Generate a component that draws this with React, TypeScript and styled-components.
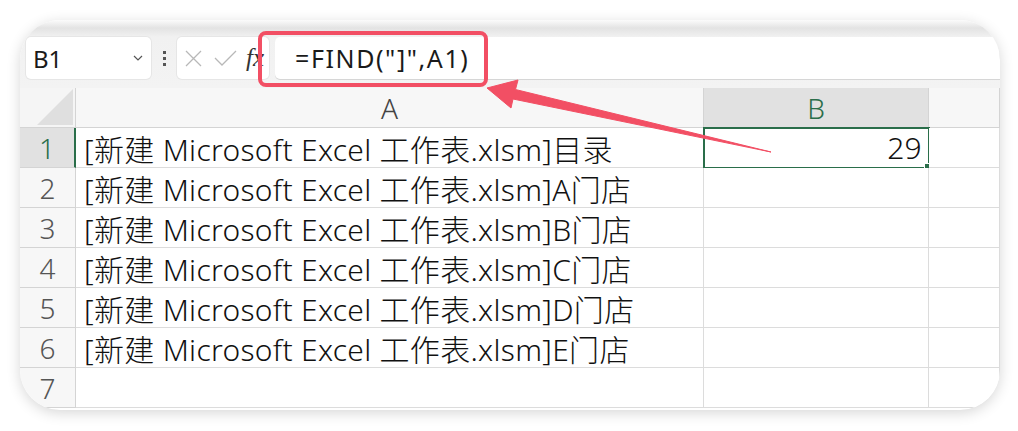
import * as React from 'react';
import styled, { createGlobalStyle } from 'styled-components';

const GlobalStyle = createGlobalStyle`
  html, body {
    margin: 0;
    padding: 0;
    background: #ffffff;
  }
  body {
    font-family: "Noto Sans", "Noto Sans CJK SC", sans-serif;
    color: #1a1a1a;
  }
`;

const rows = [
  '[新建 Microsoft Excel 工作表.xlsm]目录',
  '[新建 Microsoft Excel 工作表.xlsm]A门店',
  '[新建 Microsoft Excel 工作表.xlsm]B门店',
  '[新建 Microsoft Excel 工作表.xlsm]C门店',
  '[新建 Microsoft Excel 工作表.xlsm]D门店',
  '[新建 Microsoft Excel 工作表.xlsm]E门店',
  '',
];

const App = () => {
  return (
    <>
      <GlobalStyle />
      <Page>
        <Card>
          <Toolbar>
            <NameBox>
              <span>B1</span>
              <Chevron viewBox="0 0 10 6">
                <path d="M1 1l4 4 4-4" fill="none" stroke="#555" strokeWidth="1.2" />
              </Chevron>
            </NameBox>
            <Dots>
              <i />
              <i />
              <i />
            </Dots>
            <ActionBox>
              <ActionIcon viewBox="0 0 17 17" width="17" height="17">
                <path d="M1 1l15 15M16 1L1 16" stroke="#b8b8b8" strokeWidth="1.3" fill="none" />
              </ActionIcon>
              <ActionIcon viewBox="0 0 23 16" width="23" height="16">
                <path d="M1 8l7 7L22 1" stroke="#b8b8b8" strokeWidth="1.3" fill="none" />
              </ActionIcon>
              <Fx>fx</Fx>
            </ActionBox>
            <FormulaInput>=FIND("]",A1)</FormulaInput>
          </Toolbar>

          <Grid>
            <Corner>
              <svg width="36" height="36" viewBox="0 0 36 36">
                <path d="M36 0V36H0Z" fill="#dfdfdf" />
              </svg>
            </Corner>
            <ColHeader>A</ColHeader>
            <ColHeader active>B</ColHeader>
            <ColHeader />

            {rows.map((text, i) => (
              <React.Fragment key={i}>
                <RowHeader active={i === 0}>{i + 1}</RowHeader>
                <Cell>{text}</Cell>
                <Cell align="right" selected={i === 0}>
                  {i === 0 ? '29' : ''}
                  {i === 0 && <FillHandle />}
                </Cell>
                <Cell />
              </React.Fragment>
            ))}
          </Grid>
        </Card>

        <Annotation viewBox="0 0 1018 431" width="1018" height="431">
          <rect x="260" y="33" width="226" height="52" rx="6" fill="none" stroke="#f24f64" strokeWidth="4" />
          <path
            d="M487 88 L518 80 L515.5 89.5 L771 152 L513 99 L511 108 Z"
            fill="#f24f64"
            stroke="#f24f64"
            strokeWidth="1"
            strokeLinejoin="round"
          />
        </Annotation>
      </Page>
    </>
  );
};

export default App;

const Page = styled.div`
  position: relative;
  width: 1018px;
  height: 431px;
  padding: 20px 18px 21px 20px;
  box-sizing: border-box;
`;

const Card = styled.div`
  width: 980px;
  height: 390px;
  border-radius: 40px;
  overflow: hidden;
  background: #ffffff;
  box-shadow: 0 3px 14px rgba(0, 0, 0, 0.16);
  display: flex;
  flex-direction: column;
`;

const Toolbar = styled.div`
  height: 68px;
  flex: none;
  box-sizing: border-box;
  padding: 17px 0 9px 6px;
  display: flex;
  align-items: stretch;
  background: linear-gradient(to bottom, #fbfbfb 0px, #e3e3e3 8px, #f1f1f1 17px, #f3f3f3 100%);
`;

const NameBox = styled.div`
  width: 125px;
  box-sizing: border-box;
  background: #ffffff;
  border-radius: 5px;
  box-shadow: 0 0 0 1px #e6e6e6;
  display: flex;
  align-items: center;
  justify-content: space-between;
  padding: 0 8px 0 7px;
  font-family: "Noto Sans", sans-serif;
  font-size: 24px;
  color: #1a1a1a;
`;

const Chevron = styled.svg`
  width: 10px;
  height: 6px;
`;

const Dots = styled.div`
  width: 26px;
  display: flex;
  flex-direction: column;
  align-items: center;
  justify-content: center;
  gap: 3px;

  i {
    display: block;
    width: 3px;
    height: 3px;
    background: #555;
  }
`;

const ActionBox = styled.div`
  width: 92px;
  background: #ffffff;
  border-radius: 5px;
  box-shadow: 0 0 0 1px #e6e6e6;
  display: flex;
  align-items: center;
  padding-left: 8px;
  gap: 12px;
  box-sizing: border-box;
`;

const ActionIcon = styled.svg`
  flex: none;
`;

const Fx = styled.span`
  font-family: "Liberation Serif", serif;
  font-style: italic;
  font-size: 25px;
  color: #333;
  margin-left: -3px;
`;

const FormulaInput = styled.div`
  flex: 1;
  margin-left: 6px;
  background: #ffffff;
  border-radius: 5px 0 0 5px;
  box-shadow: 0 1px 0 #d6d6d6;
  display: flex;
  align-items: center;
  padding-left: 20px;
  font-family: "Noto Sans", sans-serif;
  font-size: 25px;
  letter-spacing: 1.6px;
  color: #1a1a1a;
`;

const Grid = styled.div`
  display: grid;
  grid-template-columns: 56px 628px 225px 1fr;
  grid-auto-rows: 40px;
`;

const Corner = styled.div`
  background: #f5f5f5;
  border-right: 1px solid #d4d4d4;
  border-bottom: 1px solid #d4d4d4;
  display: flex;
  align-items: flex-end;
  justify-content: flex-end;
  padding: 0 2px 2px 0;
`;

const ColHeader = styled.div<{ active?: boolean }>`
  background: ${(p) => (p.active ? '#e1e1e1' : '#f7f7f7')};
  border-right: 1px solid #d4d4d4;
  border-bottom: 1px solid #d4d4d4;
  display: flex;
  align-items: center;
  justify-content: center;
  font-size: 28px;
  font-weight: 300;
  color: ${(p) => (p.active ? '#2a6e4a' : '#444')};
`;

const RowHeader = styled.div<{ active?: boolean }>`
  background: ${(p) => (p.active ? '#e1e1e1' : '#f7f7f7')};
  border-right: ${(p) => (p.active ? '2px solid #2a6e4a' : '1px solid #d4d4d4')};
  border-bottom: 1px solid #d4d4d4;
  display: flex;
  align-items: center;
  justify-content: center;
  font-size: 28px;
  font-weight: 300;
  color: ${(p) => (p.active ? '#2a6e4a' : '#555')};
`;

const Cell = styled.div<{ align?: 'left' | 'right'; selected?: boolean }>`
  position: relative;
  background: #ffffff;
  border-right: 1px solid #dcdcdc;
  border-bottom: 1px solid #dcdcdc;
  display: flex;
  align-items: center;
  justify-content: ${(p) => (p.align === 'right' ? 'flex-end' : 'flex-start')};
  padding: 0 6px 0 8px;
  font-family: "Noto Sans", "Noto Sans CJK SC", sans-serif;
  font-size: 30px;
  font-weight: 300;
  letter-spacing: 0.3px;
  color: #111;
  white-space: nowrap;
  ${(p) =>
    p.selected &&
    `
    outline: 2px solid #2a6e4a;
    outline-offset: -1px;
  `}
`;

const FillHandle = styled.span`
  position: absolute;
  right: -4px;
  bottom: -4px;
  width: 6px;
  height: 6px;
  background: #2a6e4a;
  border: 1px solid #ffffff;
`;

const Annotation = styled.svg`
  position: absolute;
  left: 0;
  top: 0;
  pointer-events: none;
`;
